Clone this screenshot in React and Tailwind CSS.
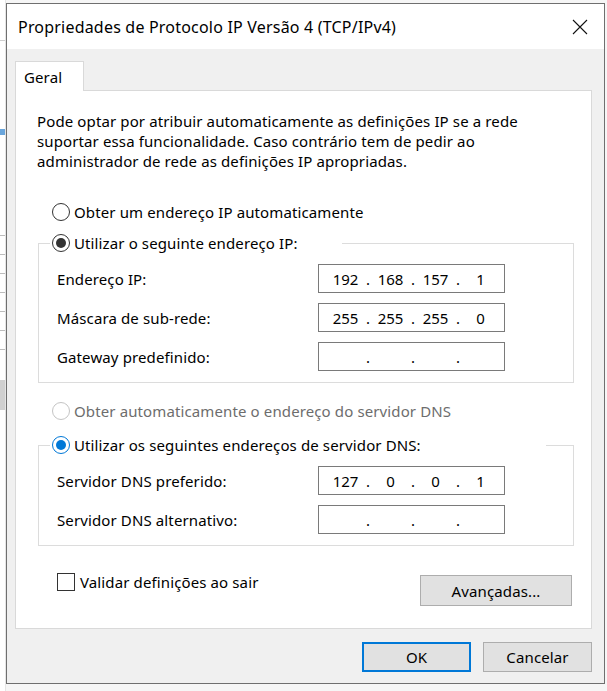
import React from "react";

function Radio({ checked, disabled, blue }) {
  const border = disabled
    ? "border-[#c4c4c4]"
    : blue
    ? "border-[#0078d7]"
    : "border-[#333333]";
  return (
    <span
      className={`w-[18px] h-[18px] rounded-full border ${border} bg-white flex items-center justify-center shrink-0`}
    >
      {checked && (
        <span
          className={`w-[10px] h-[10px] rounded-full ${
            blue ? "bg-[#0078d7]" : "bg-[#333333]"
          }`}
        />
      )}
    </span>
  );
}

function IpBox({ values }) {
  return (
    <div className="w-[187px] h-[29px] border border-[#7a7a7a] bg-white flex items-center pl-[10px] text-black tracking-normal">
      {values.map((v, i) => (
        <React.Fragment key={i}>
          <span className="w-[33px] text-center">{v}</span>
          {i < 3 && <span className="w-[12px] text-center">.</span>}
        </React.Fragment>
      ))}
    </div>
  );
}

function Row({ label, values }) {
  return (
    <div className="flex items-center h-[29px] pl-[18px]">
      <span className="w-[261px]">{label}</span>
      <IpBox values={values} />
    </div>
  );
}

function Group({ legend, legendWidth, blue, children }) {
  return (
    <div className="ml-[1px] w-[536px] border border-[#dcdcdc] pb-[11px]">
      <div className="-mt-[11px] h-[20px] ml-[11px] flex">
        <span className={`bg-white h-[20px] flex items-center gap-[4px] pl-[2px] ${legendWidth}`}>
          <Radio checked blue={blue} />
          <span className="whitespace-nowrap">{legend}</span>
        </span>
      </div>
      <div className="mt-[11px] flex flex-col gap-[10px]">{children}</div>
    </div>
  );
}

function Button({ children, primary, className = "" }) {
  return (
    <div
      className={`flex items-center justify-center bg-[#e1e1e1] ${
        primary ? "border-2 border-[#0078d7]" : "border border-[#adadad]"
      } ${className}`}
    >
      {children}
    </div>
  );
}

export default function App() {
  return (
    <div className="w-[607px] h-[691px] overflow-hidden bg-[#f6f6f6] flex font-['Noto_Sans',Arial,sans-serif] text-[15px] tracking-[0.12px] text-black leading-[20px]">
      <div className="w-[6px] h-full bg-white border-r border-[#e5e5e5] flex flex-col">
        <div className="h-[40px]" />
        <div className="h-px bg-[#cfcfcf]" />
        <div className="h-[88px]" />
        <div className="h-[6px] bg-[#6aa6dc]" />
        <div className="h-[100px]" />
        <div className="flex flex-col gap-[18px]">
          <div className="h-px bg-[#bdbdbd]" />
          <div className="h-px bg-[#bdbdbd]" />
          <div className="h-px bg-[#bdbdbd]" />
          <div className="h-px bg-[#bdbdbd]" />
          <div className="h-px bg-[#bdbdbd]" />
          <div className="h-px bg-[#bdbdbd]" />
          <div className="h-px bg-[#bdbdbd]" />
        </div>
        <div className="h-[30px]" />
        <div className="h-[30px] bg-[#d0d0d0]" />
      </div>
      <div className="pt-[3px]">
        <div className="w-[599px] h-[681px] border border-[#6f6f6f] bg-[#f0f0f0] flex flex-col">
          <div className="h-[45px] bg-white flex items-center justify-between pl-[11px] pr-[16px]">
            <span className="whitespace-nowrap text-[16px] tracking-[0.2px]">
              Propriedades de Protocolo IP Versão 4 (TCP/IPv4)
            </span>
            <svg width="16" height="16" viewBox="0 0 16 16">
              <path d="M1 1 L15 15 M15 1 L1 15" stroke="#111" strokeWidth="1.1" fill="none" />
            </svg>
          </div>
          <div className="px-[8px] pt-[12px] flex flex-col">
            <div className="flex">
              <div className="relative z-10 -mb-px w-[69px] h-[30px] border border-b-0 border-[#d9d9d9] bg-white flex items-center pl-[8px]">
                Geral
              </div>
            </div>
            <div className="w-[577px] h-[539px] border border-[#d9d9d9] bg-white pl-[21px] pt-[20px] flex flex-col">
              <p className="whitespace-nowrap">
                Pode optar por atribuir automaticamente as definições IP se a rede
                <br />
                suportar essa funcionalidade. Caso contrário tem de pedir ao
                <br />
                administrador de rede as definições IP apropriadas.
              </p>
              <div className="mt-[31px] ml-[15px] h-[20px] flex items-center gap-[4px]">
                <Radio />
                <span>Obter um endereço IP automaticamente</span>
              </div>
              <div className="mt-[21px]">
                <Group legend="Utilizar o seguinte endereço IP:" legendWidth="w-[292px]">
                  <Row label="Endereço IP:" values={["192", "168", "157", "1"]} />
                  <Row label="Máscara de sub-rede:" values={["255", "255", "255", "0"]} />
                  <Row label="Gateway predefinido:" values={["", "", "", ""]} />
                </Group>
              </div>
              <div className="mt-[18px] ml-[15px] h-[20px] flex items-center gap-[4px] text-[#6d6d6d]">
                <Radio disabled />
                <span>Obter automaticamente o endereço do servidor DNS</span>
              </div>
              <div className="mt-[24px]">
                <Group
                  legend="Utilizar os seguintes endereços de servidor DNS:"
                  legendWidth="w-[496px]"
                  blue
                >
                  <Row label="Servidor DNS preferido:" values={["127", "0", "0", "1"]} />
                  <Row label="Servidor DNS alternativo:" values={["", "", "", ""]} />
                </Group>
              </div>
              <div className="mt-[27px] ml-[1px] w-[536px] flex items-start justify-between">
                <div className="ml-[19px] h-[18px] flex items-center gap-[5px]">
                  <span className="w-[18px] h-[18px] border border-[#333333] bg-white" />
                  <span>Validar definições ao sair</span>
                </div>
                <Button className="mt-[2px] mr-[2px] w-[152px] h-[31px]">Avançadas...</Button>
              </div>
            </div>
            <div className="mt-[13px] pr-[4px] flex justify-end gap-[12px]">
              <Button primary className="w-[109px] h-[30px]">OK</Button>
              <Button className="w-[109px] h-[30px]">Cancelar</Button>
            </div>
          </div>
        </div>
      </div>
    </div>
  );
}
